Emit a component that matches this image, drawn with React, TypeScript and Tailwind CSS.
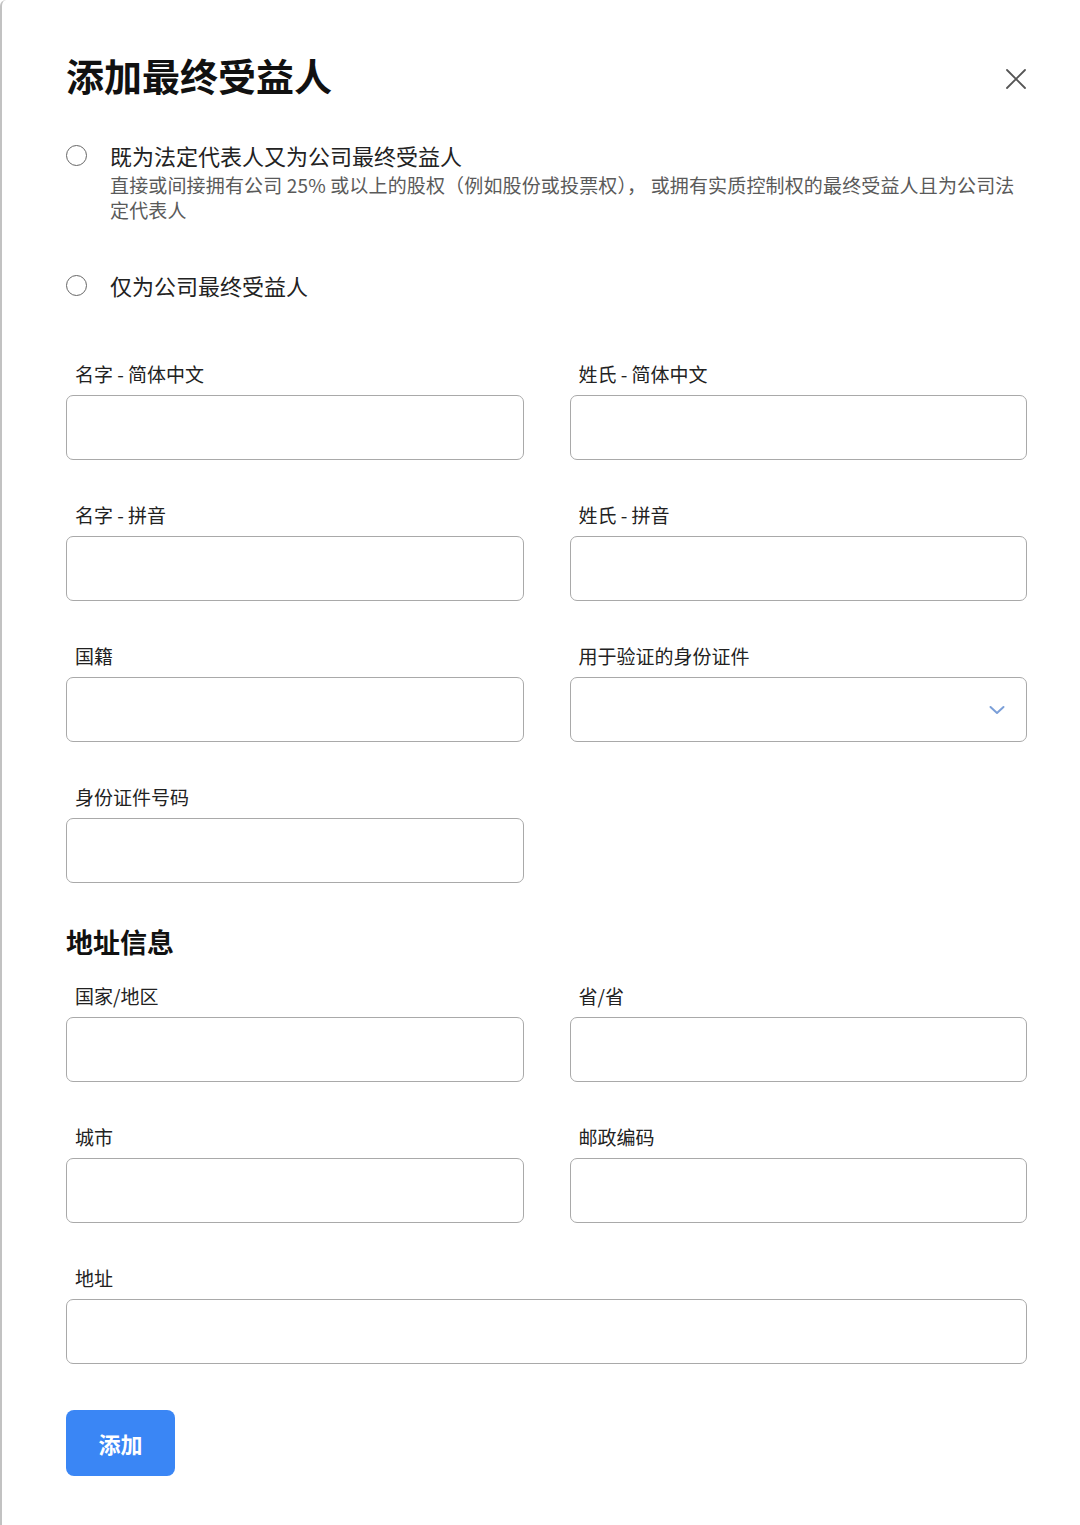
import { useState } from 'react'

const FONT = "font-['Noto_Sans_CJK_SC','Noto_Sans',sans-serif]"

function Field({ label, select, wide }: { label: string; select?: boolean; wide?: boolean }) {
  return (
    <div className={wide ? 'col-span-2' : ''}>
      <div className="pl-[9px] mb-[9px] text-[19px] leading-[24px] text-[#222]">{label}</div>
      <div className="relative">
        <input
          className="block w-full h-[65px] rounded-[7px] border border-[#a9a9a9] bg-white px-3 text-[19px] outline-none"
          readOnly={select}
        />
        {select && (
          <svg className="absolute right-[22px] top-1/2 -translate-y-1/2" width="16" height="10" viewBox="0 0 16 10" fill="none">
            <polyline points="1.5,2 8,8 14.5,2" stroke="#7b9fd8" strokeWidth="2" strokeLinecap="round" strokeLinejoin="round" />
          </svg>
        )}
      </div>
    </div>
  )
}

function Radio({ checked, onClick }: { checked: boolean; onClick: () => void }) {
  return (
    <button onClick={onClick} className="h-[30px] flex items-center shrink-0">
      <span className="w-[21px] h-[21px] rounded-full border-[1.5px] border-[#666] flex items-center justify-center">
        {checked && <span className="w-[11px] h-[11px] rounded-full bg-[#3a86f5]" />}
      </span>
    </button>
  )
}

export default function App() {
  const [role, setRole] = useState<string | null>(null)

  return (
    <div className={`${FONT} min-h-[1525px] bg-white border-l-2 border-[#c2c2c2] rounded-tl-md pl-[64px] pr-[53px] pt-[50px] pb-[48px]`}>
      <div className="flex items-center justify-between">
        <h1 className="text-[38px] leading-[50px] font-bold text-[#111]">添加最终受益人</h1>
        <button className="mt-2 w-[22px] h-[22px]" aria-label="关闭">
          <svg width="22" height="22" viewBox="0 0 22 22" fill="none">
            <path d="M2 2L20 20M20 2L2 20" stroke="#555" strokeWidth="1.8" strokeLinecap="round" />
          </svg>
        </button>
      </div>

      {/* 身份选择 */}
      <div className="mt-[40px] flex gap-[23px]">
        <Radio checked={role === 'both'} onClick={() => setRole('both')} />
        <div>
          <div className="text-[22px] leading-[30px] text-[#222]">既为法定代表人又为公司最终受益人</div>
          <p className="mt-[2px] text-[19px] leading-[25px] tracking-[0.15px] text-[#5a5a5a]">
            直接或间接拥有公司 25% 或以上的股权（例如股份或投票权）， 或拥有实质控制权的最终受益人且为公司法<br />定代表人
          </p>
        </div>
      </div>
      <div className="mt-[48px] flex gap-[23px]">
        <Radio checked={role === 'ubo'} onClick={() => setRole('ubo')} />
        <div className="text-[22px] leading-[30px] text-[#222]">仅为公司最终受益人</div>
      </div>

      <div className="mt-[62px] grid grid-cols-2 gap-x-[46px] gap-y-[43px]">
        <Field label="名字 - 简体中文" />
        <Field label="姓氏 - 简体中文" />
        <Field label="名字 - 拼音" />
        <Field label="姓氏 - 拼音" />
        <Field label="国籍" />
        <Field label="用于验证的身份证件" select />
        <Field label="身份证件号码" />
      </div>

      <h2 className="mt-[41px] text-[27px] leading-[36px] font-bold text-[#111]">地址信息</h2>

      <div className="mt-[24px] grid grid-cols-2 gap-x-[46px] gap-y-[43px]">
        <Field label="国家/地区" />
        <Field label="省/省" />
        <Field label="城市" />
        <Field label="邮政编码" />
        <Field label="地址" wide />
      </div>

      <button className="mt-[46px] w-[109px] h-[66px] rounded-[8px] bg-[#3a86f5] text-white text-[22px] font-bold">
        添加
      </button>
    </div>
  )
}
